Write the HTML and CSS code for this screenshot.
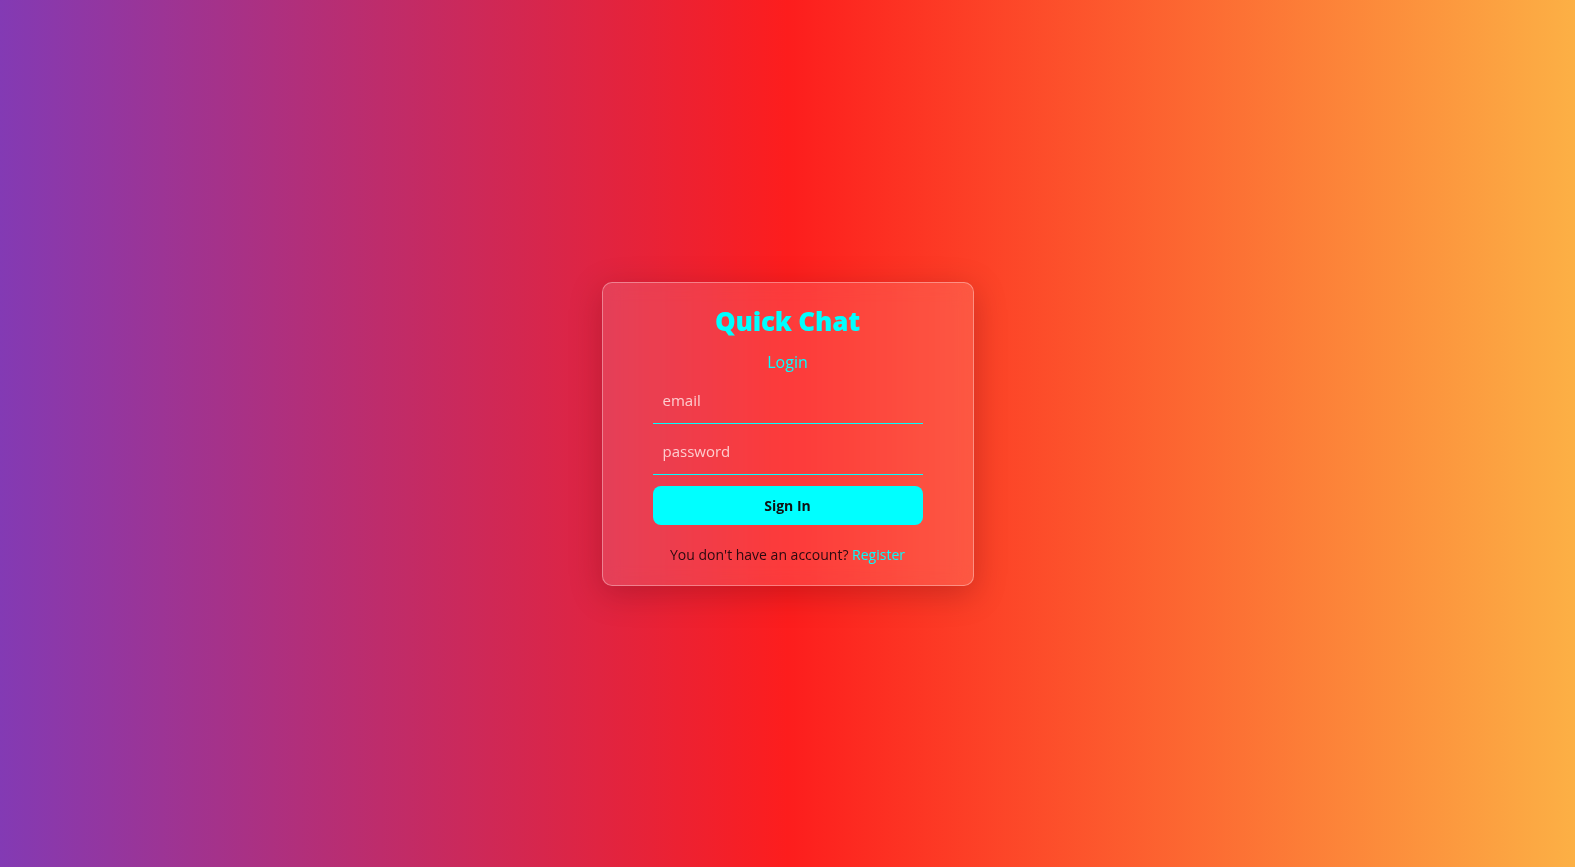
FILE: index.html
```html
<!DOCTYPE html>
<html lang="en">
<head>
<meta charset="utf-8">
<title>Quick Chat - Login</title>
<link rel="stylesheet" href="styles.css">
</head>
<body>
<main class="page">
  <form class="card">
    <h1 class="title">Quick Chat</h1>
    <h2 class="subtitle">Login</h2>
    <input class="field" type="email" placeholder="email">
    <input class="field" type="password" placeholder="password">
    <button class="btn" type="button">Sign In</button>
    <p class="foot">You don't have an account? <a class="link" href="#">Register</a></p>
  </form>
</main>
</body>
</html>
```

FILE: styles.css
```css
* { box-sizing: border-box; }
html, body { margin: 0; height: 100%; }
body {
  font-family: "Open Sans", "DejaVu Sans", sans-serif;
  background: linear-gradient(90deg, #833ab4 0%, #fd1d1d 50%, #fcb045 100%);
}
.page {
  height: 100%;
  display: flex;
  align-items: center;
  justify-content: center;
}
.card {
  width: 372px;
  padding: 20px 50px 21px;
  display: flex;
  flex-direction: column;
  align-items: stretch;
  background: rgba(255, 255, 255, 0.13);
  border: 1px solid rgba(255, 255, 255, 0.35);
  border-radius: 10px;
  box-shadow: 0 8px 32px rgba(60, 0, 20, 0.25);
  backdrop-filter: blur(10px);
}
.title {
  margin: 0;
  text-align: center;
  color: #00ffff;
  font-size: 26px;
  font-weight: 800;
  line-height: 36px;
  letter-spacing: -0.2px;
}
.subtitle {
  margin: 11px 0 0;
  text-align: center;
  color: #00ffff;
  font-size: 16px;
  font-weight: 400;
  line-height: 24px;
}
.field {
  height: 46px;
  margin-top: 5px;
  padding: 0 10px;
  border: none;
  border-bottom: 1px solid #00ffff;
  background: transparent;
  outline: none;
  font-family: inherit;
  font-size: 15px;
  color: #fff;
}
.field:first-of-type { margin-top: 4px; }
.field::placeholder { color: rgba(255, 230, 230, 0.85); }
.btn {
  height: 39px;
  margin-top: 11px;
  border: none;
  border-radius: 8px;
  background: #00ffff;
  color: #111;
  font-family: inherit;
  font-size: 14px;
  font-weight: 700;
}
.foot {
  margin: 20px 0 0;
  text-align: center;
  font-size: 14px;
  color: #2a0a10;
}
.link {
  color: #00ffff;
  text-decoration: none;
  font-weight: 500;
}
```
